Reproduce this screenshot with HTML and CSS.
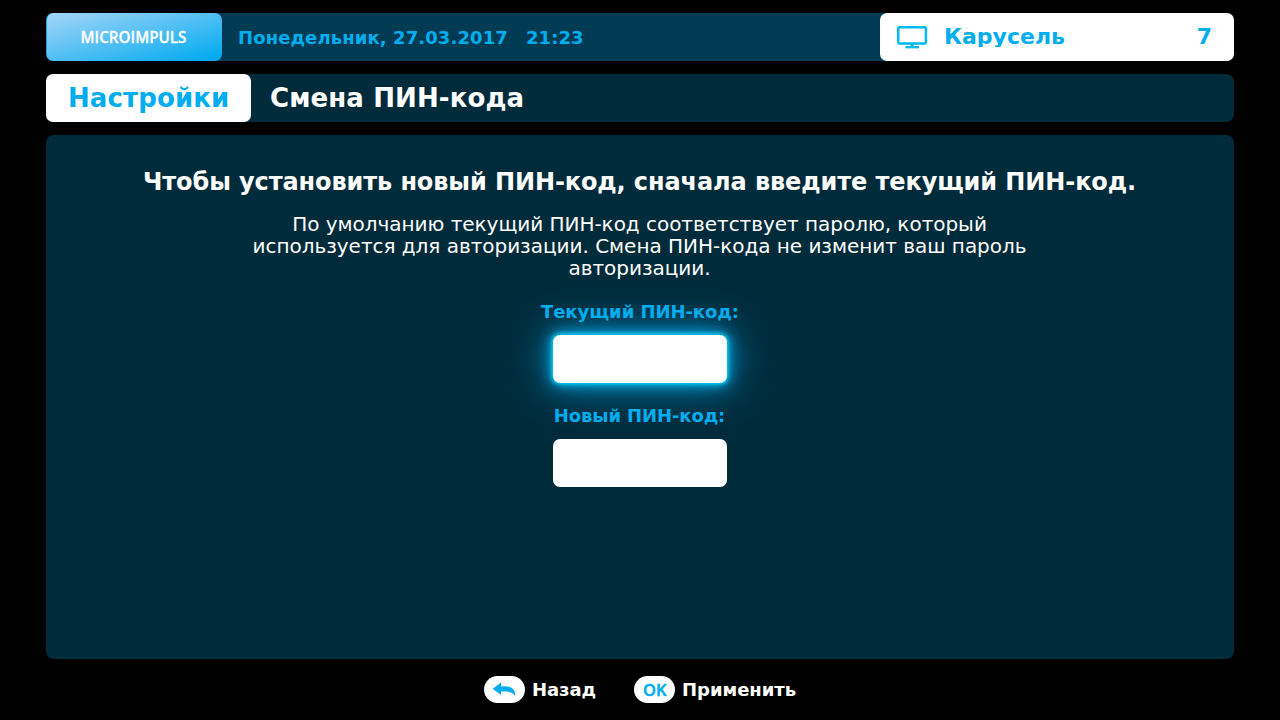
FILE: index.html
```html
<!DOCTYPE html>
<html lang="ru">
<head>
<meta charset="utf-8">
<title>Смена ПИН-кода</title>
<link rel="stylesheet" href="styles.css">
</head>
<body>
<div class="screen">
  <header class="topbar">
    <div class="logo">
      <svg width="176" height="48" viewBox="0 0 176 48"><text class="logo-text" x="34.5" y="30" textLength="106" lengthAdjust="spacingAndGlyphs">MICROIMPULS</text></svg>
    </div>
    <div class="datetime"><span>Понедельник, 27.03.2017</span><span>21:23</span></div>
    <div class="channel">
      <svg class="tv" width="32" height="24" viewBox="0 0 32 24" fill="none" stroke="#00b8f3">
        <rect x="2.3" y="2.3" width="27.6" height="16.2" rx="1.2" stroke-width="2.5"/>
        <path d="M16 19v3" stroke-width="3"/>
        <path d="M9.500 22.200h13.500" stroke-width="2.300"/>
      </svg>
      <span class="channel-name">Карусель</span>
      <span class="channel-number">7</span>
    </div>
  </header>
  <nav class="breadcrumb">
    <div class="section">Настройки</div>
    <h1 class="title">Смена ПИН-кода</h1>
  </nav>
  <main class="panel">
    <h2 class="lead">Чтобы установить новый ПИН-код, сначала введите текущий ПИН-код.</h2>
    <p class="note">По умолчанию текущий ПИН-код соответствует паролю, который<br>используется для авторизации. Смена ПИН-кода не изменит ваш пароль<br>авторизации.</p>
    <div class="field field-active">
      <div class="label">Текущий ПИН-код:</div>
      <div class="input"></div>
    </div>
    <div class="field">
      <div class="label label-new">Новый ПИН-код:</div>
      <div class="input"></div>
    </div>
  </main>
  <footer class="hints">
    <div class="hint">
      <span class="key"><svg width="41" height="27" viewBox="0 0 41 27"><path fill="#00aeef" d="M8.700 12.700L17 6.600V10.400C25 9.900 31 10.800 31.300 20.200C28.800 16 25.500 15.300 17 15.400V19Z"/></svg></span>
      <span>Назад</span>
    </div>
    <div class="hint">
      <span class="key"><svg width="41" height="27" viewBox="0 0 41 27"><text class="key-text" x="9" y="20" textLength="23.500" lengthAdjust="spacingAndGlyphs">OK</text></svg></span>
      <span>Применить</span>
    </div>
  </footer>
</div>
</body>
</html>
```

FILE: styles.css
```css
* { box-sizing: border-box; }
body {
  margin: 0;
  background: #000;
  color: #fff;
  font-family: "DejaVu Sans", sans-serif;
}
svg { display: block; }
.screen {
  width: 1280px;
  height: 720px;
  padding: 13px 46px 0;
  overflow: hidden;
}
.topbar {
  display: flex;
  height: 48px;
  border-radius: 8px;
  background: #003b54;
}
.logo {
  width: 176px;
  border-radius: 7px;
  border-left: 1px solid #1c9fd3;
  background: linear-gradient(to bottom right, #9dd3f7 5%, #00aaf0 97%);
}
.logo svg { margin-left: -1px; }
.logo-text {
  font: 600 17px "Open Sans", sans-serif;
  fill: #fff;
  stroke: #fff;
  stroke-width: 0.3px;
}
.datetime {
  flex: 1;
  display: flex;
  gap: 18px;
  padding-left: 16px;
  line-height: 49px;
  font-size: 18px;
  font-weight: bold;
  letter-spacing: 0.1px;
  color: #00aeef;
}
.channel {
  display: flex;
  width: 354px;
  padding: 12px 22px 0 16px;
  border-radius: 7px;
  background: #fff;
  color: #00aeef;
  font-size: 22px;
  font-weight: bold;
  line-height: 24px;
}
.channel-name {
  flex: 1;
  height: 22px;
  margin-left: 16px;
  overflow: hidden;
}
.breadcrumb {
  display: flex;
  height: 48px;
  margin-top: 13px;
  border-radius: 8px;
  background: #002b3b;
  font-size: 26px;
  font-weight: bold;
  letter-spacing: 0.11px;
  line-height: 48px;
}
.section {
  width: 205px;
  padding-left: 22px;
  border-radius: 7px;
  background: #fff;
  color: #00aeef;
}
.title {
  margin: 0 0 0 19px;
  font-size: 26px;
}
.panel {
  display: flex;
  flex-direction: column;
  align-items: center;
  height: 524px;
  margin-top: 13px;
  padding-top: 33px;
  border-radius: 8px;
  background: #002b3b;
}
.lead {
  margin: 0 1px 0 0;
  font-size: 24px;
  line-height: 28px;
  letter-spacing: -0.1px;
}
.note {
  margin: 17px 1px 0 0;
  font-size: 20px;
  line-height: 22px;
  letter-spacing: -0.03px;
  text-align: center;
}
.field {
  display: flex;
  flex-direction: column;
  align-items: center;
  gap: 13px;
  margin-top: 22px;
}
.label {
  position: relative;
  z-index: 1;
  font-size: 18px;
  font-weight: bold;
  line-height: 21px;
  letter-spacing: -0.05px;
  color: #00aeef;
}
.label-new {
  margin-right: 1px;
  letter-spacing: -0.12px;
}
.input {
  width: 174px;
  height: 48px;
  border-radius: 7px;
  background: #fff;
}
.field-active .input {
  box-shadow: 0 0 4px 1px #00e4ff, 0 0 14px 2px #00a8e8, 0 0 40px 5px #0080b4;
}
.hints {
  display: flex;
  justify-content: center;
  gap: 38px;
  margin-top: 17px;
  font-size: 18px;
  font-weight: bold;
  line-height: 27px;
}
.hint {
  display: flex;
  gap: 7px;
  letter-spacing: -0.05px;
}
.key {
  width: 41px;
  height: 27px;
  border-radius: 14px;
  background: #fff;
}
.key-text {
  font: 600 17px "Open Sans", sans-serif;
  letter-spacing: 0;
  fill: #00aeef;
  stroke: #00aeef;
  stroke-width: 0.5px;
}
```
